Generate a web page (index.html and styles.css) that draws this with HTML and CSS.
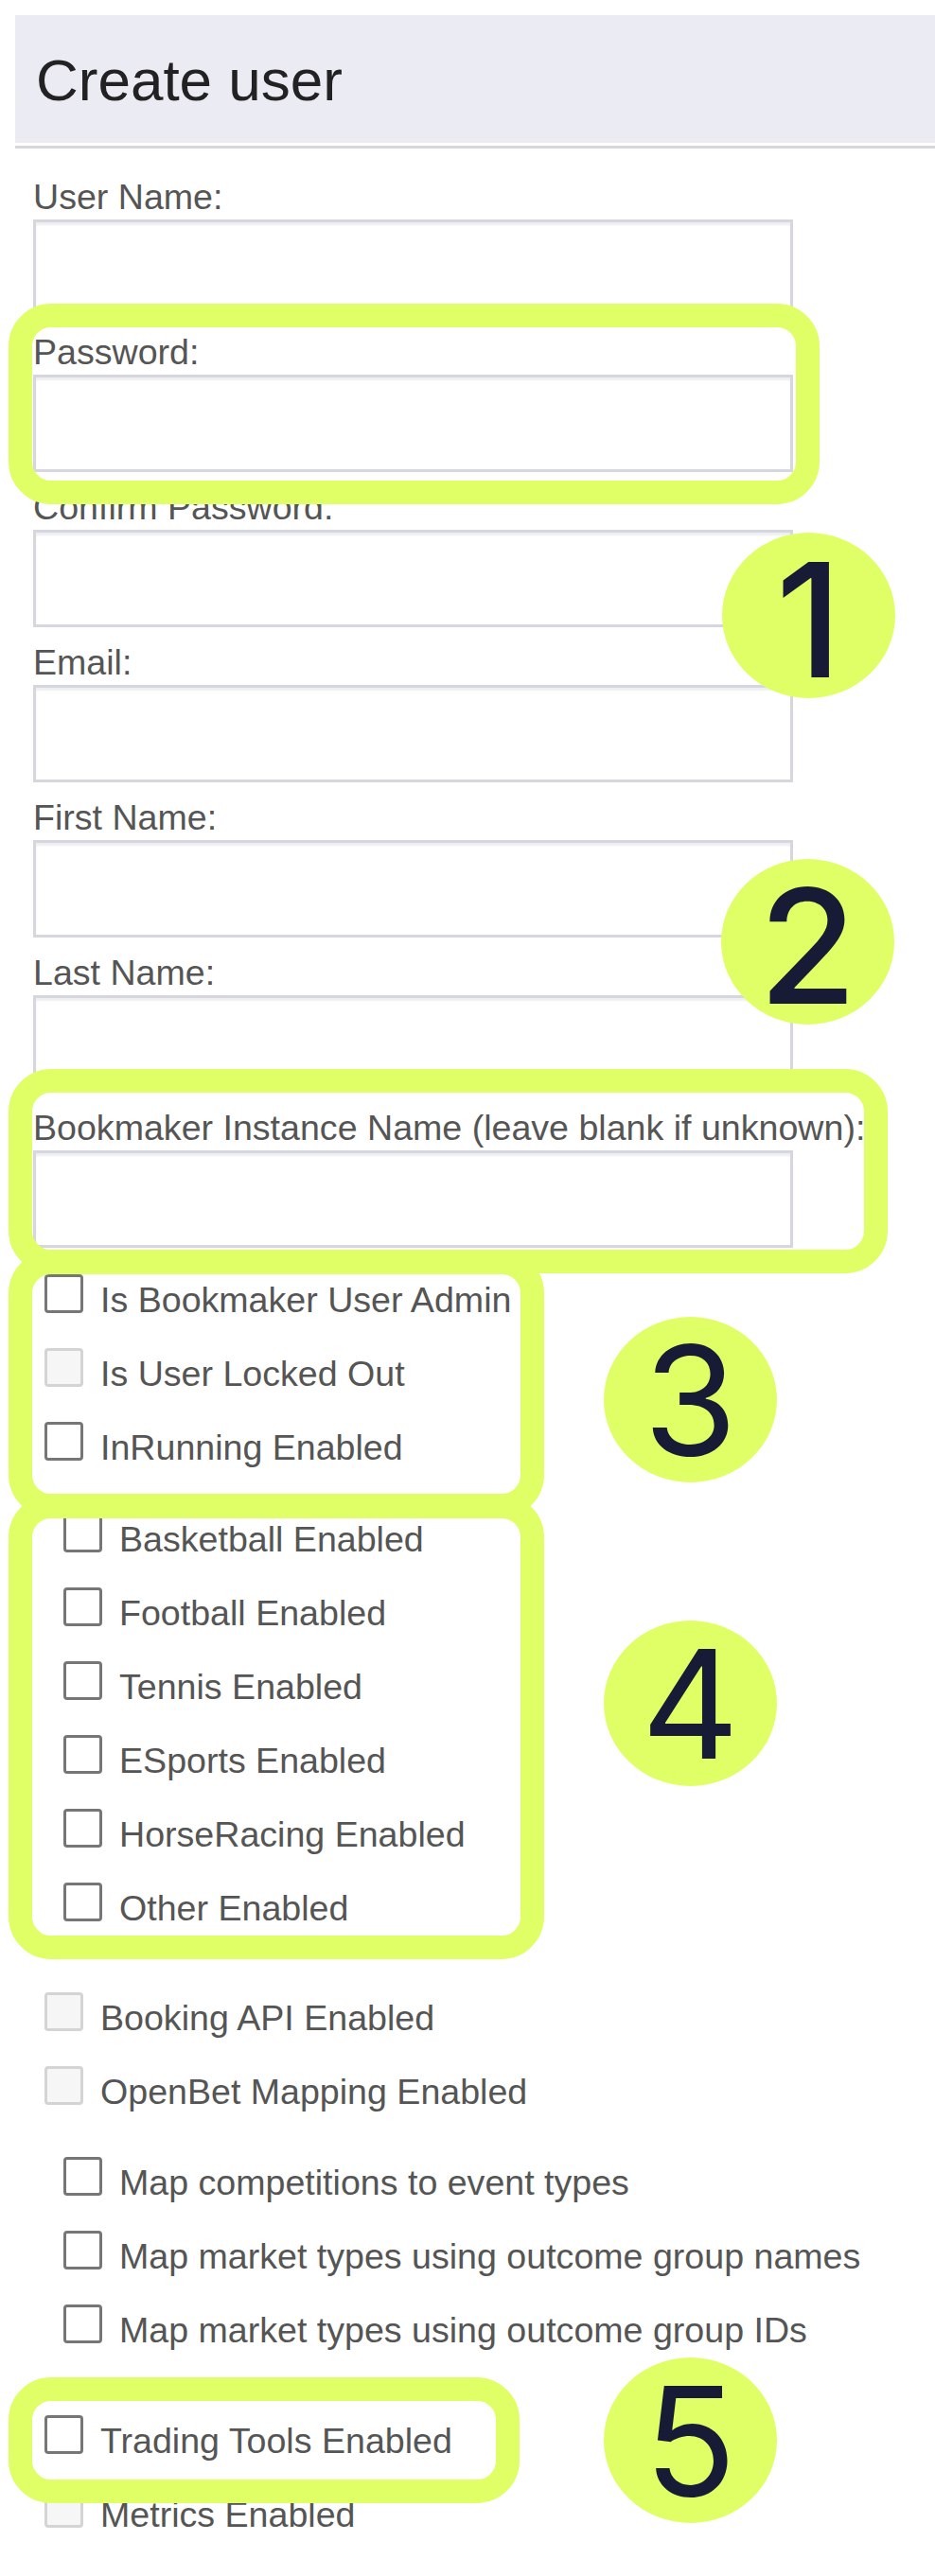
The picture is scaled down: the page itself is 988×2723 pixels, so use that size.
FILE: index.html
```html
<!DOCTYPE html>
<html lang="en">
<head>
    <meta charset="UTF-8">
    <meta name="viewport" content="width=device-width, initial-scale=1.0">
    <title>Create user</title>
    <link rel="stylesheet" href="styles.css">
</head>
<body>

    <!-- Page title -->
    <div class="page-head">
        <h1>Create user</h1>
    </div>

    <form class="user-form">
        <div class="field"><label>User Name:</label><input type="text"></div>
        <div class="field"><label>Password:</label><input type="password"></div>
        <div class="field"><label>Confirm Password:</label><input type="password"></div>
        <div class="field"><label>Email:</label><input type="text"></div>
        <div class="field"><label>First Name:</label><input type="text"></div>
        <div class="field"><label>Last Name:</label><input type="text"></div>
        <div class="field"><label>Bookmaker Instance Name (leave blank if unknown):</label><input type="text"></div>

        <!-- User flags -->
        <div class="check-group first">
            <label class="check"><input type="checkbox">Is Bookmaker User Admin</label>
            <label class="check"><input type="checkbox" disabled>Is User Locked Out</label>
            <label class="check"><input type="checkbox">InRunning Enabled</label>
        </div>

        <!-- Sports -->
        <div class="check-group indent sports">
            <label class="check"><input type="checkbox">Basketball Enabled</label>
            <label class="check"><input type="checkbox">Football Enabled</label>
            <label class="check"><input type="checkbox">Tennis Enabled</label>
            <label class="check"><input type="checkbox">ESports Enabled</label>
            <label class="check"><input type="checkbox">HorseRacing Enabled</label>
            <label class="check"><input type="checkbox">Other Enabled</label>
        </div>

        <div class="check-group apis">
            <label class="check"><input type="checkbox" disabled>Booking API Enabled</label>
            <label class="check"><input type="checkbox" disabled>OpenBet Mapping Enabled</label>
        </div>

        <div class="check-group indent mapping">
            <label class="check"><input type="checkbox">Map competitions to event types</label>
            <label class="check"><input type="checkbox">Map market types using outcome group names</label>
            <label class="check"><input type="checkbox">Map market types using outcome group IDs</label>
        </div>

        <div class="check-group tools">
            <label class="check"><input type="checkbox">Trading Tools Enabled</label>
            <label class="check"><input type="checkbox" disabled>Metrics Enabled</label>
        </div>
    </form>

    <!-- Annotation frames -->
    <div class="mark mark-1"></div>
    <div class="mark mark-2"></div>
    <div class="mark mark-3"></div>
    <div class="mark mark-4"></div>
    <div class="mark mark-5"></div>

    <!-- Step numbers -->
    <div class="num num-1 big">1</div>
    <div class="num num-2 big">2</div>
    <div class="num num-3">3</div>
    <div class="num num-4">4</div>
    <div class="num num-5">5</div>

</body>
</html>
```

FILE: styles.css
```css
body {
    margin: 0;
    position: relative;
    background: #fff;
    font-family: "Liberation Sans", Arial, sans-serif;
    color: #555;
}

/* Title bar */
.page-head {
    margin: 16px 0 0 16px;
    padding-bottom: 3px;
    border-bottom: 3px solid #d5d6df;
}

.page-head h1 {
    margin: 0;
    height: 135px;
    box-sizing: border-box;
    padding: 38px 0 0 22px;
    background: #ebebf4;
    font-size: 62px;
    line-height: 62px;
    font-weight: normal;
    color: #222;
}

/* Form */
.user-form {
    margin-top: 30px;
    padding-left: 35px;
}

.field label {
    display: block;
    font-size: 37.6px;
    line-height: 42px;
    white-space: nowrap;
}

.field input {
    display: block;
    width: 803px;
    height: 103px;
    box-sizing: border-box;
    margin: 3px 0 16px;
    border: 3px solid #d5d6de;
    box-shadow: inset 0 3px 2px #eeeff2;
    background: #fff;
    outline: none;
}

/* Checkbox rows */
.check-group {
    padding-left: 12px;
}

.check-group.indent {
    padding-left: 32px;
}

.check-group.first { margin-top: 7px; }
.check-group.sports { margin-top: 19px; }
.check-group.apis { margin-top: 38px; }
.check-group.mapping { margin-top: 18px; }
.check-group.tools { margin-top: 39px; }

.check {
    display: flex;
    align-items: center;
    height: 78px;
    font-size: 37.6px;
    line-height: 42px;
    white-space: nowrap;
}

.check input {
    appearance: none;
    -webkit-appearance: none;
    flex: none;
    width: 41px;
    height: 41px;
    box-sizing: border-box;
    margin: 0 18px 13px 0;
    border: 3px solid #767676;
    border-radius: 4px;
    background: #fff;
}

.check input:disabled {
    border-color: #d4d4d4;
    background: #f6f6f6;
}

/* Lime annotation frames */
.mark {
    position: absolute;
    box-sizing: border-box;
    border: 25px solid #e0ff67;
    border-radius: 45px;
    pointer-events: none;
}

.mark-1 { left: 9px; top: 321px; width: 857px; height: 212px; }
.mark-2 { left: 9px; top: 1130px; width: 929px; height: 216px; }
.mark-3 { left: 9px; top: 1322px; width: 566px; height: 282px; }
.mark-4 { left: 9px; top: 1580px; width: 566px; height: 491px; }
.mark-5 { left: 9px; top: 2513px; width: 540px; height: 133px; }

/* Numbered circles */
.num {
    position: absolute;
    width: 183px;
    height: 175px;
    border-radius: 50%;
    background: #e0ff67;
    display: flex;
    align-items: center;
    justify-content: center;
    font-family: Inter, "Liberation Sans", sans-serif;
    font-size: 160px;
    line-height: 1;
    color: #171b35;
}

.num.big {
    font-size: 168px;
    font-weight: 500;
    padding-top: 8px;
    box-sizing: border-box;
}

.num-1 { left: 763px; top: 563px; }
.num-2 { left: 762px; top: 908px; }
.num-3 { left: 638px; top: 1392px; }
.num-4 { left: 638px; top: 1713px; }
.num-5 { left: 638px; top: 2492px; }
```
